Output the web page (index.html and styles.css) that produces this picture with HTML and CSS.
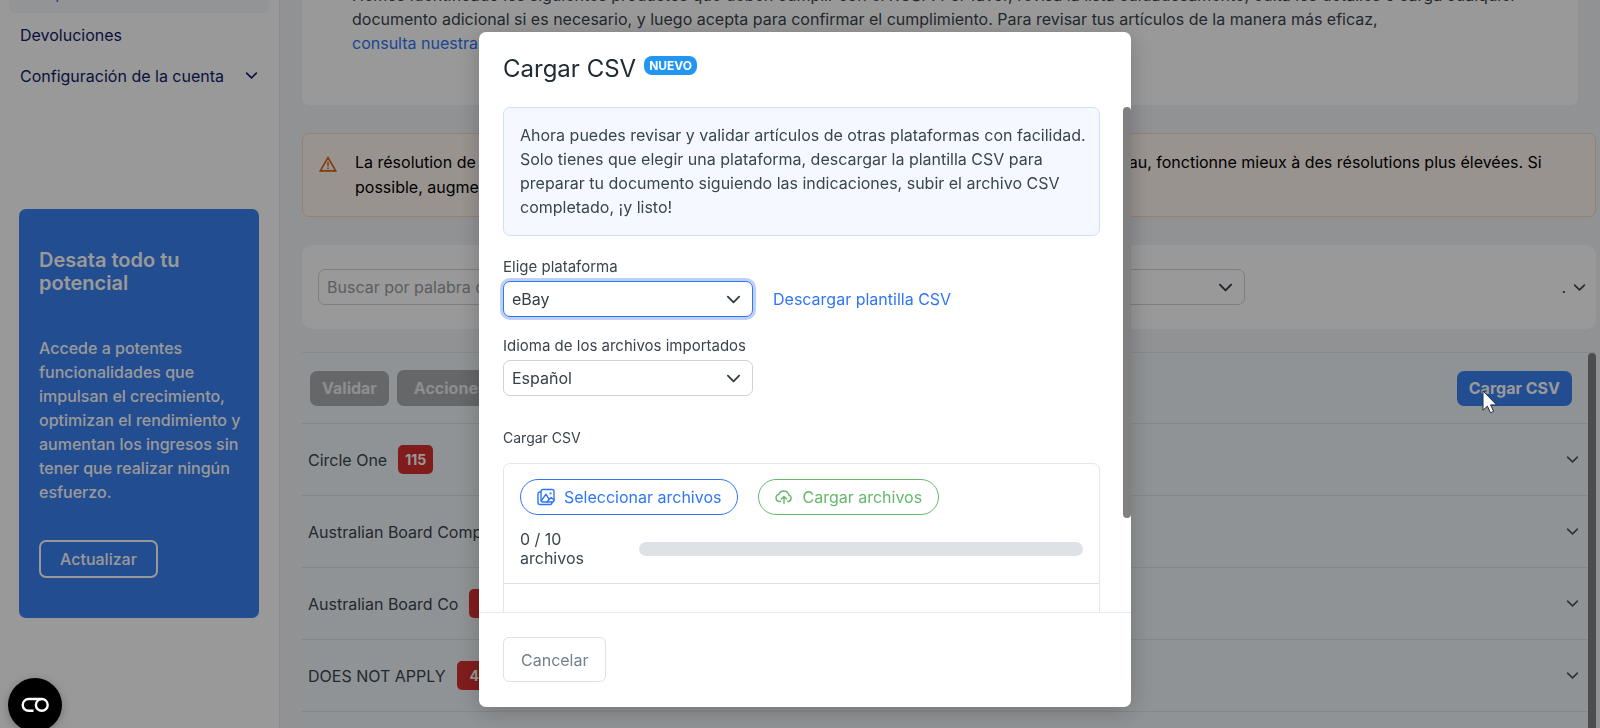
FILE: index.html
```html
<!DOCTYPE html>
<html lang="es">
<head>
<meta charset="utf-8">
<meta name="viewport" content="width=device-width, initial-scale=1">
<title>Cargar CSV</title>
<link rel="stylesheet" href="styles.css">
</head>
<body>
<svg class="symbols" aria-hidden="true">
  <symbol id="chevron" viewBox="0 0 16 16"><path d="M2 5l6 6 6-6" fill="none" stroke="currentColor" stroke-width="2" stroke-linecap="round" stroke-linejoin="round"/></symbol>
</svg>

<div class="app">
  <aside class="sidebar">
    <nav class="nav">
      <a class="nav-item nav-item-active" href="#">Cumplimiento</a>
      <a class="nav-item" href="#">Devoluciones</a>
      <a class="nav-item" href="#">Configuración de la cuenta <svg class="icon-small"><use href="#chevron"/></svg></a>
    </nav>
    <section class="promo">
      <h2 class="promo-title">Desata todo tu potencial</h2>
      <p class="promo-text">Accede a potentes funcionalidades que impulsan el crecimiento, optimizan el rendimiento y aumentan los ingresos sin tener que realizar ningún esfuerzo.</p>
      <button class="promo-button" type="button">Actualizar</button>
    </section>
  </aside>

  <main class="main">
    <section class="intro">
      <p>Hemos identificado los siguientes productos que deben cumplir con el RGSP. Por favor, revisa la lista cuidadosamente, edita los detalles o carga cualquier documento adicional si es necesario, y luego acepta para confirmar el cumplimiento. Para revisar tus artículos de la manera más eficaz,<br><a class="link" href="#">consulta nuestra guía</a></p>
    </section>

    <div class="alert">
      <svg class="alert-icon" viewBox="0 0 18 16"><path d="M9 1.6L1.3 14.9h15.4z" fill="none" stroke="currentColor" stroke-width="1.6" stroke-linejoin="miter"/><path d="M9 5.8v4.4M9 11.4v1.7" stroke="currentColor" stroke-width="1.5"/></svg>
      <p>La résolution de votre écran est actuellement un peu réduite. Cette page, qui comprend un grand tableau, fonctionne mieux à des résolutions plus élevées. Si possible, augmentez la résolution.</p>
    </div>

    <section class="filters">
      <input class="search" type="text" aria-label="Buscar" placeholder="Buscar por palabra clave">
      <span class="select-wrap filter-select">
        <select class="select" aria-label="Filtro"><option></option></select>
        <svg class="select-chevron"><use href="#chevron"/></svg>
      </span>
      <button class="more" type="button" aria-label="Más opciones"><span>.</span><svg class="icon-small"><use href="#chevron"/></svg></button>
    </section>

    <section class="listing">
      <div class="toolbar">
        <button class="button button-muted" type="button">Validar</button>
        <button class="button button-muted button-wide" type="button">Acciones</button>
        <button class="button button-primary" type="button">Cargar CSV</button>
      </div>
      <button class="row" type="button"><span>Circle One</span><span class="count">115</span><svg class="icon-small row-chevron"><use href="#chevron"/></svg></button>
      <button class="row" type="button"><span>Australian Board Company</span><span class="count">8</span><svg class="icon-small row-chevron"><use href="#chevron"/></svg></button>
      <button class="row" type="button"><span>Australian Board Co</span><span class="count">6</span><svg class="icon-small row-chevron"><use href="#chevron"/></svg></button>
      <button class="row" type="button"><span>DOES NOT APPLY</span><span class="count">4</span><svg class="icon-small row-chevron"><use href="#chevron"/></svg></button>
      <div class="row"></div>
      <div class="list-thumb"></div>
    </section>
  </main>
</div>

<div class="backdrop">
  <div class="modal" role="dialog" aria-modal="true" aria-labelledby="modal-title">
    <header class="modal-header">
      <h1 class="modal-title" id="modal-title">Cargar CSV</h1>
      <span class="new-badge">NUEVO</span>
    </header>
    <div class="modal-body">
      <p class="info">Ahora puedes revisar y validar artículos de otras plataformas con facilidad. Solo tienes que elegir una plataforma, descargar la plantilla CSV para preparar tu documento siguiendo las indicaciones, subir el archivo CSV completado, ¡y listo!</p>

      <label class="label" for="platform">Elige plataforma</label>
      <div class="field-line">
        <span class="select-wrap">
          <select class="select select-focused" id="platform"><option>eBay</option></select>
          <svg class="select-chevron"><use href="#chevron"/></svg>
        </span>
        <a class="link" href="#">Descargar plantilla CSV</a>
      </div>

      <label class="label" for="language">Idioma de los archivos importados</label>
      <div class="field-line">
        <span class="select-wrap">
          <select class="select" id="language"><option>Español</option></select>
          <svg class="select-chevron"><use href="#chevron"/></svg>
        </span>
      </div>

      <p class="upload-label">Cargar CSV</p>
      <div class="upload">
        <div class="upload-head">
          <div class="upload-actions">
            <button class="pill pill-blue" type="button">
              <svg class="pill-icon" viewBox="0 0 18 18" fill="none" stroke="currentColor" stroke-width="1.4" stroke-linecap="round" stroke-linejoin="round"><rect x="4" y="1.5" width="13" height="12.5" rx="2"/><path d="M4 4H3a2 2 0 0 0-2 2v8.5a2 2 0 0 0 2 2h10a2 2 0 0 0 2-2V14M4.5 12.5L9 6.2l3.2 5.4M10 13.8L14 9.6l3 2.2"/><circle cx="13.6" cy="5.4" r=".4"/></svg>
              Seleccionar archivos</button>
            <button class="pill pill-green" type="button">
              <svg class="pill-icon" viewBox="0 0 18 18" fill="none" stroke="currentColor" stroke-width="1.4" stroke-linecap="round" stroke-linejoin="round"><path d="M5.4 13.5H4.6a3.6 3.6 0 0 1-.8-7.1 5.3 5.3 0 0 1 10.1.6 3.4 3.4 0 0 1-.4 6.5h-.8"/><path d="M9 15.5V8.6M6.3 11.1L9 8.4l2.7 2.7"/></svg>
              Cargar archivos</button>
          </div>
          <div class="progress-line">
            <span class="progress-text">0 / 10 archivos</span>
            <div class="progress" role="progressbar" aria-label="Archivos" aria-valuenow="0" aria-valuemin="0" aria-valuemax="10"></div>
          </div>
        </div>
        <div class="upload-list"></div>
      </div>
      <div class="modal-thumb"></div>
    </div>
    <footer class="modal-footer">
      <button class="cancel" type="button">Cancelar</button>
    </footer>
  </div>
</div>

<button class="consent" type="button" aria-label="Preferencias de cookies">
  <svg class="consent-icon" viewBox="0 0 28 16" fill="none" stroke="currentColor" stroke-width="2.4"><path d="M12.5 13.8H7.6a5.9 5.9 0 0 1 0-11.8h13"/><circle cx="20.8" cy="7.9" r="5.9"/></svg>
</button>
<svg class="cursor" viewBox="0 0 16 24"><path d="M1 1v19.2l4.4-4.1 3 6.7 3.2-1.4-3-6.5h6z" fill="#fff" stroke="#20304a" stroke-width="1"/></svg>
</body>
</html>
```
FILE: styles.css
```css
* { box-sizing: border-box; }

html, body { height: 100%; }

body {
  margin: 0;
  overflow: hidden;
  position: relative;
  font: 16px/24px Inter, "Liberation Sans", sans-serif;
  color: #3a454d;
  background: #f1f3f7;
}

h1, h2, p { margin: 0; }

button, input, select { font: inherit; color: inherit; margin: 0; }

a { text-decoration: none; }

.link { color: #2f76f6; }

.symbols { position: absolute; width: 0; height: 0; }

.icon-small { width: 13px; height: 13px; flex: none; }

/* Page */
.app {
  display: grid;
  grid-template-columns: 280px 1fr;
  min-height: 100%;
}

.sidebar {
  background: #fff;
  border-right: 1px solid #e6e8ec;
  padding: 0 20px 0 19px;
}

.nav {
  margin: -28px -10px 113px;
}

.nav-item {
  display: flex;
  align-items: center;
  justify-content: space-between;
  height: 41px;
  padding: 0 11px;
  border-radius: 6px;
  color: #0f1c66;
}

.nav-item-active { background: #f3f7fb; color: #2f76f6; margin-bottom: 1px; }

.promo {
  background: #3a80f0;
  color: #fff;
  border-radius: 7px;
  padding: 40px 12px 40px 20px;
}

.promo-title { font-size: 20px; line-height: 23px; font-weight: 600; margin-bottom: 41px; }

.promo-text { font-weight: 500; margin-bottom: 36px; }

.promo-button {
  height: 38px;
  padding: 0 19px;
  border: 2px solid #fff;
  border-radius: 7px;
  background: none;
  font-weight: 500;
}

.main { padding: 0 4px 0 22px; min-width: 0; height: 100vh; overflow: hidden; }

.intro {
  margin: -17px 18px 28px 0;
  padding: 0 50px 50px;
  background: #fff;
  border-radius: 7px;
}

.alert {
  display: flex;
  gap: 18px;
  padding: 16px 52px 16px 16px;
  border: 1px solid #fbd5ba;
  border-radius: 7px;
  background: #fff6f0;
  color: #000;
  line-height: 25px;
}

.alert-icon { width: 18px; height: 16px; flex: none; margin-top: 6px; color: #d96010; }

.filters {
  display: flex;
  align-items: center;
  gap: 16px;
  margin: 28px 0 23px;
  padding: 24px 10px 24px 16px;
  background: #fff;
  border-radius: 10px;
}

.search, .select {
  height: 36px;
  border: 1px solid #cfd3d8;
  border-radius: 7px;
  background: #fff;
}

.search { width: 340px; padding: 0 8px; }

.search::placeholder { color: #9a9da2; opacity: 1; }

.select-wrap { position: relative; display: flex; width: 250px; color: #343f47; }

.filter-select { width: 571px; }

.select { appearance: none; width: 100%; padding: 0 32px 0 8px; }

.select-focused { border-color: #2f76f6; box-shadow: 0 0 0 3px #bdd1f8; }

.select-chevron {
  position: absolute;
  right: 12px;
  top: 11px;
  width: 15px;
  height: 15px;
  pointer-events: none;
}

.more {
  display: flex;
  align-items: center;
  gap: 7px;
  margin-left: auto;
  padding: 0;
  border: 0;
  background: none;
}

.listing {
  position: relative;
  padding-right: 8px;
  border-top: 1px solid #e0e4e8;
}

.toolbar {
  display: flex;
  align-items: center;
  gap: 8px;
  height: 70px;
  padding: 0 16px 0 8px;
  background: #f0f5f8;
}

.button {
  height: 35px;
  padding: 0 12px;
  border: 0;
  border-radius: 7px;
  font-weight: 700;
}

.button-muted { background: #aaacae; color: #ebedef; }

.button-wide { height: 36px; padding: 0 17px; }

.button-primary { margin-left: auto; background: #3a80f0; color: #fff; }

.row {
  display: flex;
  align-items: center;
  gap: 11px;
  width: 100%;
  height: 72px;
  padding: 0 9px 0 6px;
  border: 0;
  border-top: 1px solid #dde2e5;
  background: #f0f5f8;
}

.row-chevron { margin-left: auto; color: #4b555c; }

.count {
  min-width: 35px;
  padding: 0 6px;
  border-radius: 5px;
  background: #d82f2f;
  color: #fff;
  font-size: 14px;
  line-height: 29px;
  font-weight: 700;
  text-align: center;
}

.list-thumb {
  position: absolute;
  top: 0;
  right: 0;
  bottom: 0;
  width: 8px;
  border-radius: 4px;
  background: #7f807f;
}

/* Modal */
.backdrop {
  position: fixed;
  inset: 0;
  padding: 32px 0 21px 10px;
  display: flex;
  justify-content: center;
  background: rgba(0, 0, 0, .4);
}

.modal {
  display: flex;
  flex-direction: column;
  width: 652px;
  border-radius: 7px;
  background: #fff;
  box-shadow: 0 4px 24px rgba(0, 0, 0, .22);
}

.modal-header {
  display: flex;
  gap: 8px;
  padding: 24px 24px 25px;
}

.modal-title { font-size: 24px; line-height: 26px; font-weight: 400; color: #212b33; }

.new-badge {
  align-self: flex-start;
  padding: 0 5px;
  border-radius: 8px;
  background: #2196f3;
  color: #fff;
  font-size: 12px;
  line-height: 19px;
  font-weight: 700;
}

.modal-body {
  position: relative;
  flex: 1;
  min-height: 0;
  overflow: hidden;
  padding: 0 31px 0 24px;
}

.info {
  margin-bottom: 19px;
  padding: 15px 10px 16px 16px;
  border: 1px solid #cfe0fb;
  border-radius: 7px;
  background: #f5f9ff;
}

.label { display: block; font-size: 15px; line-height: 24px; }

.field-line { display: flex; align-items: center; gap: 20px; margin: 2px 0 17px; }

.upload-label { margin: 30px 0 13px; font-size: 14px; }

.upload { border: 1px solid #e3e6ea; border-radius: 7px; }

.upload-head { padding: 15px 16px; border-bottom: 1px solid #dcdfe3; }

.upload-actions { display: flex; gap: 20px; margin-bottom: 15px; }

.pill {
  display: flex;
  align-items: center;
  gap: 9px;
  height: 36px;
  padding: 0 16px;
  border: 1px solid currentColor;
  border-radius: 18px;
  background: #fff;
}

.pill-icon { width: 18px; height: 18px; }

.pill-blue { color: #2f76f6; }

.pill-green { color: #66b96a; }

.progress-line { display: flex; align-items: center; justify-content: space-between; }

.progress-text { width: 80px; line-height: 19px; }

.progress { width: 444px; height: 14px; border-radius: 7px; background: #dee2e6; }

.upload-list { height: 160px; }

.modal-thumb {
  position: absolute;
  top: 0;
  right: 0;
  width: 8px;
  height: 411px;
  border-radius: 4px;
  background: #808080;
}

.modal-footer { padding: 24px 24px 25px; border-top: 1px solid #e6e9ed; }

.cancel {
  height: 45px;
  padding: 0 17px;
  border: 1px solid #dde2ec;
  border-radius: 6px;
  background: #fff;
  color: #74808a;
}

/* Floating items */
.consent {
  position: fixed;
  left: 8px;
  bottom: -4px;
  display: grid;
  place-items: center;
  width: 54px;
  height: 54px;
  padding: 0;
  border: 0;
  border-radius: 50%;
  background: #000;
  color: #fff;
  box-shadow: 0 2px 8px rgba(0, 0, 0, .25);
}

.consent-icon { width: 28px; height: 16px; }

.cursor { position: absolute; left: 1482px; top: 390px; width: 16px; height: 24px; }
```
